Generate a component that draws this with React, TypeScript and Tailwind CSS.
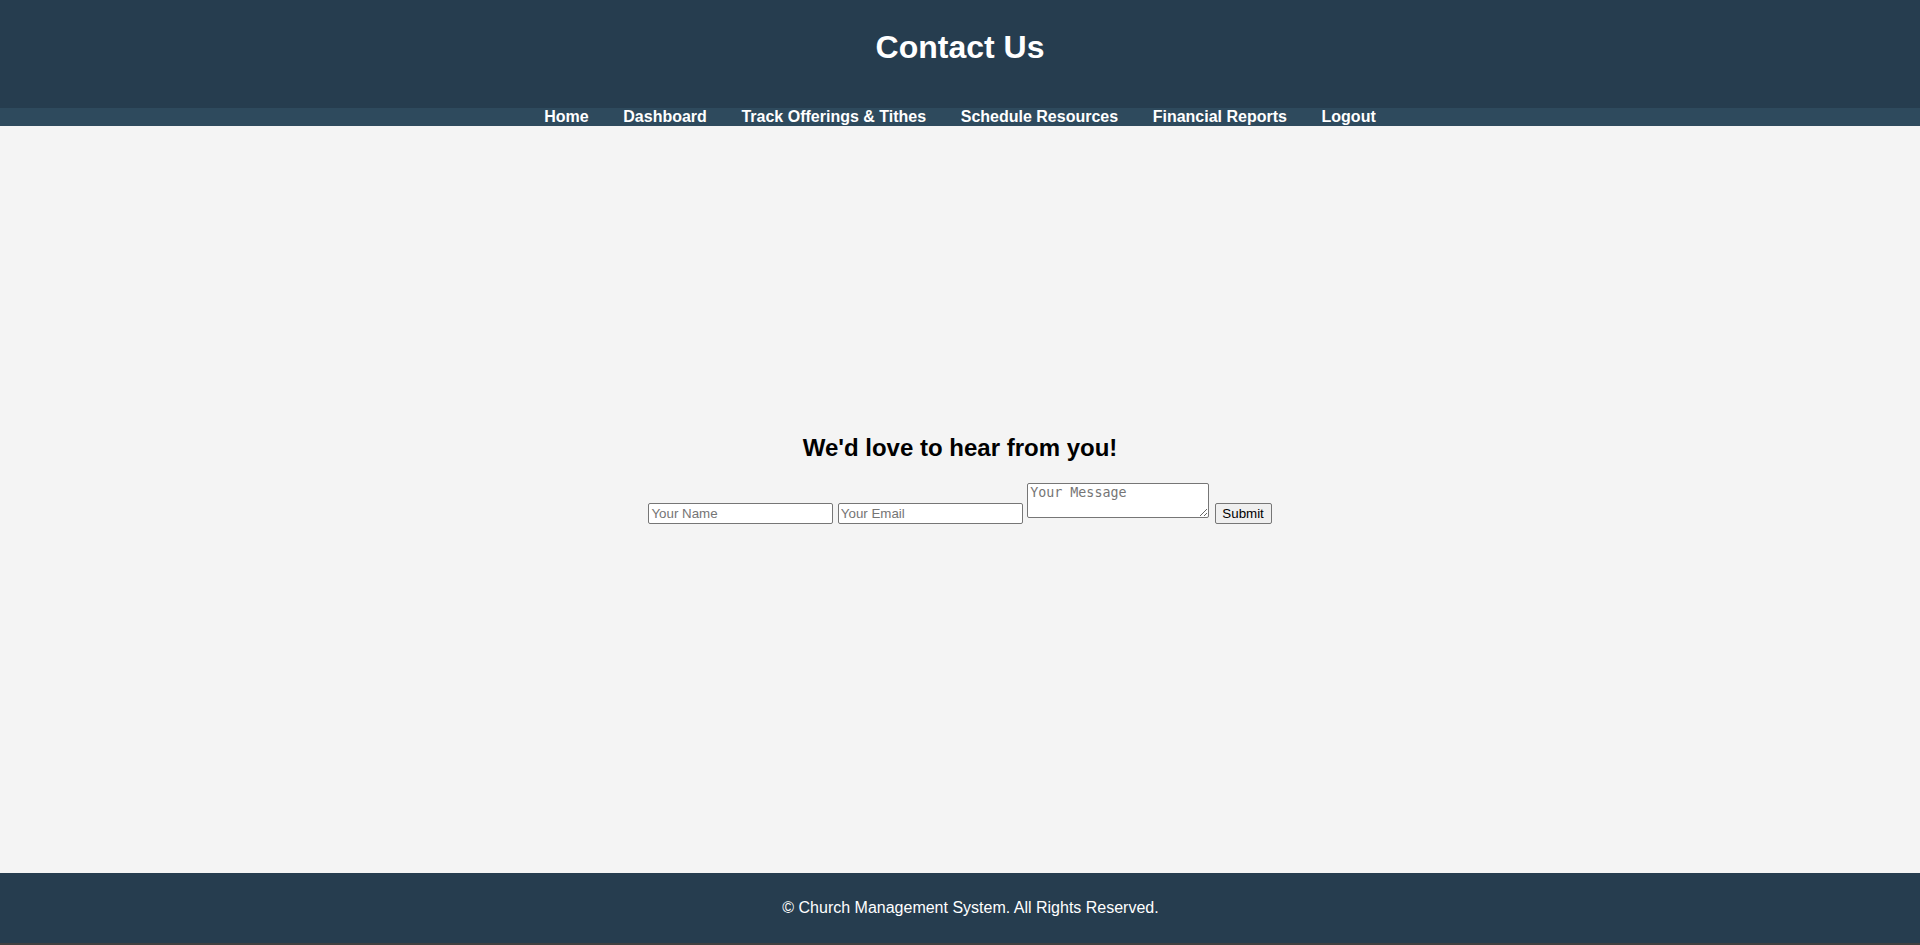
import React from "react";

export default function App() {
  const links = [
    "Home",
    "Dashboard",
    "Track Offerings & Tithes",
    "Schedule Resources",
    "Financial Reports",
    "Logout",
  ];
  return (
    <div
      className="min-h-[945px] flex flex-col bg-[#f4f4f4] text-black"
      style={{ fontFamily: '"Liberation Sans", Arial, sans-serif' }}
    >
      <header className="h-[108px] bg-[#263d4f] pt-[29px] text-white">
        <h1 className="text-center text-[32px] font-bold leading-[normal]">Contact Us</h1>
      </header>
      <nav className="h-[18px] bg-[#2e4a5d] flex justify-center gap-[34.6px] text-[16px] font-bold leading-[18px] text-white">
        {links.map((l) => (
          <a key={l} href="#" className="text-white no-underline">
            {l}
          </a>
        ))}
      </nav>
      <main className="flex-1 pt-[308px] flex flex-col items-center">
        <h2 className="text-[24px] font-bold leading-[normal] text-center">We'd love to hear from you!</h2>
        <form
          className="mt-[19px] flex items-start gap-[4.4px]"
          onSubmit={(e) => e.preventDefault()}
        >
          <input
            type="text"
            placeholder="Your Name"
            className="mt-[22px] w-[185px] h-[21px] bg-white border border-[#767676] rounded-[2px] px-[2px] text-[13.33px] placeholder:text-[#757575]"
          />
          <input
            type="email"
            placeholder="Your Email"
            className="mt-[22px] w-[185px] h-[21px] bg-white border border-[#767676] rounded-[2px] px-[2px] text-[13.33px] placeholder:text-[#757575]"
          />
          <textarea
            placeholder="Your Message"
            className="mt-[1.5px] w-[182px] h-[35.5px] bg-white border border-[#767676] rounded-[2px] px-[2px] pt-[1px] text-[13.33px] leading-[15px] placeholder:text-[#757575] resize"
            style={{ fontFamily: '"DejaVu Sans Mono", monospace' }}
          />
          <button
            type="submit"
            className="ml-[1px] mt-[22px] w-[57px] h-[21px] bg-[#efefef] border border-[#767676] rounded-[2px] text-[13.33px] text-black leading-none"
          >
            Submit
          </button>
        </form>
      </main>
      <footer className="h-[70px] bg-[#263d4f] flex items-center justify-center pl-[21px] text-white text-[16px]">
        <p>© Church Management System. All Rights Reserved.</p>
      </footer>
      <div className="h-[2px] bg-[#404040]" />
    </div>
  );
}
